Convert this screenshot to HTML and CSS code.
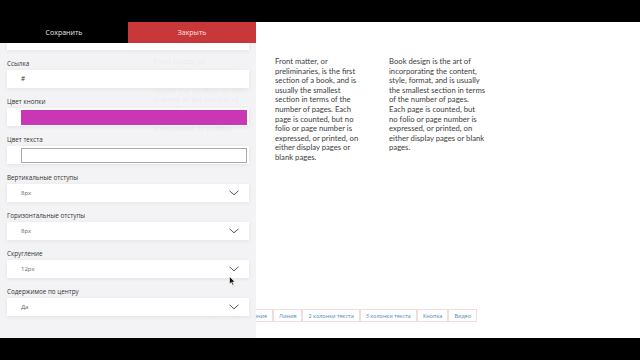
FILE: index.html
```html
<!DOCTYPE html>
<html lang="ru">
<head>
<meta charset="utf-8">
<title>Редактор</title>
<link rel="stylesheet" href="styles.css">
</head>
<body>
<div class="bar"></div>
<div class="stage">
  <main class="page">
    <div class="cols">
      <p class="col ghost">Front matter, or preliminaries, is the first section of a book, and is usually the smallest section in terms of the number of pages. Each page is counted, but no folio or page number is expressed, or printed.</p>
      <p class="col c1">Front matter, or<br>preliminaries, is the first<br>section of a book, and is<br>usually the smallest<br>section in terms of the<br>number of pages. Each<br>page is counted, but no<br>folio or page number is<br>expressed, or printed, on<br>either display pages or<br>blank pages.</p>
      <p class="col c2">Book design is the art of<br>incorporating the content,<br>style, format, and is usually<br>the smallest section in terms<br>of the number of pages.<br>Each page is counted, but<br>no folio or page number is<br>expressed, or printed, on<br>either display pages or blank<br>pages.</p>
    </div>
    <nav class="tabs">
      <span class="tab">Текст</span>
      <span class="tab">Изображение</span>
      <span class="tab">Линия</span>
      <span class="tab">2 колонки текста</span>
      <span class="tab">3 колонки текста</span>
      <span class="tab">Кнопка</span>
      <span class="tab">Видео</span>
    </nav>
  </main>
  <aside class="panel">
    <div class="head">
      <button class="btn save">Сохранить</button>
      <button class="btn close">Закрыть</button>
    </div>
    <div class="form">
      <div class="field partial"></div>
      <div class="group">
        <div class="label">Ссылка</div>
        <div class="field input">#</div>
      </div>
      <div class="group">
        <div class="label">Цвет кнопки</div>
        <div class="field color"><span class="swatch magenta"></span></div>
      </div>
      <div class="group">
        <div class="label">Цвет текста</div>
        <div class="field color"><span class="swatch white"></span></div>
      </div>
      <div class="group">
        <div class="label">Вертикальные отступы</div>
        <div class="field select"><span>8px</span><svg class="chev" width="10" height="6" viewBox="0 0 10 6"><polyline points="0.5,0.8 5,4.8 9.5,0.8" fill="none" stroke="#444" stroke-width="0.9"/></svg></div>
      </div>
      <div class="group">
        <div class="label">Горизонтальные отступы</div>
        <div class="field select"><span>8px</span><svg class="chev" width="10" height="6" viewBox="0 0 10 6"><polyline points="0.5,0.8 5,4.8 9.5,0.8" fill="none" stroke="#444" stroke-width="0.9"/></svg></div>
      </div>
      <div class="group">
        <div class="label">Скругление</div>
        <div class="field select"><span>12px</span><svg class="chev" width="10" height="6" viewBox="0 0 10 6"><polyline points="0.5,0.8 5,4.8 9.5,0.8" fill="none" stroke="#444" stroke-width="0.9"/></svg></div>
      </div>
      <div class="group">
        <div class="label">Содержимое по центру</div>
        <div class="field select"><span>Да</span><svg class="chev" width="10" height="6" viewBox="0 0 10 6"><polyline points="0.5,0.8 5,4.8 9.5,0.8" fill="none" stroke="#444" stroke-width="0.9"/></svg></div>
      </div>
    </div>
  </aside>
  <svg class="cursor" width="7" height="10" viewBox="0 0 7 10"><path d="M0.5 0.5 L0.5 8 L2.3 6.4 L3.6 9.3 L4.8 8.8 L3.6 6 L6 6 Z" fill="#111" stroke="#fff" stroke-width="0.6"/></svg>
</div>
<div class="bar"></div>
</body>
</html>
```
FILE: styles.css
```css
* { box-sizing: border-box; }
html, body { margin: 0; padding: 0; }
body {
  background: #000;
  width: 640px;
  height: 360px;
  overflow: hidden;
  font-family: "Open Sans", "Liberation Sans", sans-serif;
}
.bar { height: 22px; background: #000; }
.stage {
  position: relative;
  height: 316px;
  background: #fff;
}
.page {
  height: 316px;
  display: flex;
  flex-direction: column;
  background: #fff;
}
.cols {
  display: flex;
  padding: 35px 0 0 153px;
}
.col {
  margin: 0;
  width: 96px;
  font-family: Lato, "Open Sans", sans-serif;
  font-size: 7.7px;
  line-height: 9.6px;
  color: #3c3c3c;
  white-space: nowrap;
}
.ghost {
  width: 96px;
  margin-right: 26px;
  white-space: normal;
  color: #555;
}
.c2 { margin-left: 18px; }
.tabs {
  margin-top: auto;
  margin-bottom: 16px;
  display: flex;
  justify-content: flex-end;
  gap: 0;
  padding-right: 163px;
}
.tab {
  height: 13px;
  line-height: 12px;
  padding: 0 5px;
  border: 1px solid #f3dcdc;
  font-size: 5.5px;
  color: #4d86c0;
  white-space: nowrap;
}
.panel {
  position: absolute;
  top: 0;
  left: 0;
  width: 256px;
  height: 316px;
  background: rgba(242, 242, 244, 0.95);
}
.head { display: flex; height: 21px; }
.btn {
  flex: 1;
  border: 0;
  margin: 0;
  padding: 0;
  font-family: inherit;
  font-size: 7px;
  color: #fff;
}
.save { background: #000; color: #e8e8e8; }
.close { background: #c8383b; color: #fbe3e3; }
.form { padding: 0 7px; }
.field {
  background: #fff;
  box-shadow: 0 1px 4px rgba(0, 0, 0, 0.07);
  height: 18px;
}
.partial { height: 7px; }
.group { margin-top: 8px; }
.label {
  height: 12px;
  line-height: 12px;
  font-size: 6.3px;
  color: #333;
}
.input {
  padding-left: 14px;
  font-size: 6.3px;
  line-height: 18px;
  color: #333;
}
.color {
  display: flex;
  align-items: center;
  padding: 0 2px 0 14px;
}
.swatch { flex: 1; height: 15px; }
.magenta { background: #c936b6; }
.white { background: #fff; border: 1px solid #a8a8a8; }
.select {
  display: flex;
  align-items: center;
  justify-content: space-between;
  padding: 0 10px 0 14px;
  font-size: 6px;
  color: #666;
}
.chev { display: block; }
.cursor {
  position: absolute;
  left: 229px;
  top: 254px;
}
```
